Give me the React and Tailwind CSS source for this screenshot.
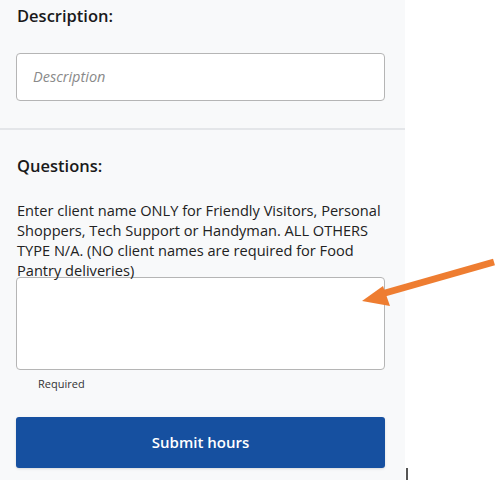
export default function App() {
  return (
    <div className="relative w-[500px] h-[480px] bg-white overflow-hidden" style={{ fontFamily: '"Open Sans", sans-serif' }}>
      <div className="w-[405px] h-[480px] bg-[#f8f9fa] flex flex-col">
        <div className="px-4 pt-[4px] pb-[27px] border-b-2 border-[#e4e6e9]">
          <div className="text-[16.5px] font-semibold text-[#1a1a1a] leading-[24px] pl-[1px]">Description:</div>
          <div className="mt-[25px] h-[48px] w-[369px] bg-white border border-[#b5b5b5] rounded-[4px] flex items-center px-4">
            <span className="italic text-[14.5px] text-[#8a8a8a]">Description</span>
          </div>
        </div>
        <div className="px-4">
          <div className="mt-[24px] text-[16.5px] font-semibold text-[#1a1a1a] leading-[24px] pl-[1px]">Questions:</div>
          <p className="mt-[22px] text-[14.6px] leading-[20px] text-[#222] pl-[1px] w-[375px]">
            Enter client name ONLY for Friendly Visitors, Personal Shoppers, Tech Support or Handyman. ALL OTHERS TYPE N/A. (NO client names are required for Food Pantry deliveries)
          </p>
          <div className="mt-[-3px] h-[93px] w-[369px] bg-white border border-[#b5b5b5] rounded-[4px]"></div>
          <div className="mt-[6px] pl-[22px] text-[11px] leading-[16px] text-[#333]">Required</div>
          <button className="mt-[25px] h-[51px] w-[369px] bg-[#1650a0] rounded-[3px] text-white text-[15px] font-semibold shadow-sm">
            Submit hours
          </button>
        </div>
      </div>
      <div className="absolute left-[406px] top-[468px] w-[1.5px] h-[12px] bg-[#555]"></div>
      <svg className="absolute left-0 top-0" width="500" height="480">
        <line x1="494" y1="262" x2="378" y2="295" stroke="#ee7d31" strokeWidth="7" />
        <polygon points="362,301 383,286 390,306" fill="#ee7d31" />
      </svg>
    </div>
  );
}
